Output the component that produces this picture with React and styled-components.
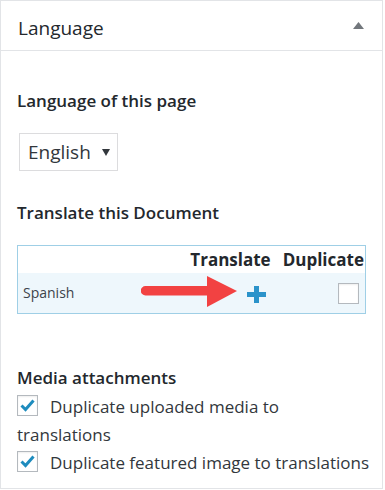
import React from "react";
import styled, { createGlobalStyle } from "styled-components";

const GlobalStyle = createGlobalStyle`
  html, body {
    margin: 0;
    padding: 0;
    background: #fff;
  }
  body {
    font-family: "Open Sans", "Noto Sans", sans-serif;
    color: #32373c;
  }
`;

const languages = [{ name: "Spanish", duplicate: false }];

const mediaOptions = [
  "Duplicate uploaded media to translations",
  "Duplicate featured image to translations"
];

const CheckIcon = () => (
  <svg width="15" height="13" viewBox="0 0 15 13">
    <path d="M1.5 6.5 L5.5 10.5 L13.5 1.5" fill="none" stroke="#1e8cbe" strokeWidth="3" />
  </svg>
);

const PlusIcon = () => (
  <svg width="19" height="17" viewBox="0 0 19 17">
    <rect x="0" y="6" width="19" height="5" fill="#2b93ca" />
    <rect x="7" y="0" width="5" height="17" fill="#2b93ca" />
  </svg>
);

const RedArrow = () => (
  <svg width="97" height="31" viewBox="0 0 97 31">
    <path d="M4.5 10 H66 V0 L96 15 L66 31 V19.5 H4.5 A4.75 4.75 0 0 1 4.5 10 Z" fill="#f24242" />
  </svg>
);

export default function App() {
  return (
    <>
      <GlobalStyle />
      <Panel>
        <Header>
          <PanelTitle>Language</PanelTitle>
          <Toggle>
            <svg width="11" height="7" viewBox="0 0 11 7">
              <path d="M5.5 0 L11 7 H0 Z" fill="#72777c" />
            </svg>
          </Toggle>
        </Header>
        <Body>
          <Label>Language of this page</Label>
          <Select>
            <span>English</span>
            <svg width="8" height="7" viewBox="0 0 8 7">
              <path d="M0 0 H8 L4 7 Z" fill="#32373c" />
            </svg>
          </Select>

          <Label top={30}>Translate this Document</Label>
          <Table>
            <thead>
              <tr>
                <Th first />
                <Th>Translate</Th>
                <Th>Duplicate</Th>
              </tr>
            </thead>
            <tbody>
              {languages.map((lang) => (
                <Row key={lang.name}>
                  <LangCell>
                    {lang.name}
                    <ArrowOverlay>
                      <RedArrow />
                    </ArrowOverlay>
                  </LangCell>
                  <ActionCell>
                    <PlusIcon />
                  </ActionCell>
                  <ActionCell>
                    <Checkbox />
                  </ActionCell>
                </Row>
              ))}
            </tbody>
          </Table>

          <Label top={52} bottom={3}>Media attachments</Label>
          {mediaOptions.map((text) => (
            <Option key={text}>
              <Checkbox checked>
                <CheckIcon />
              </Checkbox>
              {text}
            </Option>
          ))}
        </Body>
      </Panel>
    </>
  );
}

const Panel = styled.div`
  width: 383px;
  height: 489px;
  box-sizing: border-box;
  border: 1px solid #e2e4e7;
  background: #fff;
`;

const Header = styled.div`
  height: 50px;
  box-sizing: border-box;
  border-bottom: 1px solid #e2e4e7;
  padding: 4px 18px 0 17px;
  display: flex;
  align-items: center;
  justify-content: space-between;
`;

const PanelTitle = styled.h2`
  margin: 0;
  font-size: 19px;
  font-weight: 400;
  color: #23282d;
  line-height: 24px;
`;

const Toggle = styled.span`
  display: flex;
  margin-top: -4px;
`;

const Body = styled.div`
  padding: 0 8px 0 16px;
`;

const Label = styled.div`
  margin: ${(p) => p.top ?? 38}px 0 ${(p) => p.bottom ?? 20}px;
  font-size: 17px;
  font-weight: 600;
  line-height: 24px;
  color: #23282d;
`;

const Select = styled.div`
  margin-left: 2px;
  width: 99px;
  height: 38px;
  box-sizing: border-box;
  border: 1px solid #dcdcde;
  padding: 0 7px 0 8px;
  display: flex;
  align-items: center;
  justify-content: space-between;
  font-size: 19px;
  color: #32373c;
`;

const Table = styled.table`
  margin-top: 18px;
  width: 349px;
  border-collapse: collapse;
  border: 1px solid #9fcfe6;
`;

const Th = styled.th`
  width: ${(p) => (p.first ? "100%" : "auto")};
  height: 27px;
  padding: 0 1px 0 11px;
  text-align: right;
  font-size: 17px;
  font-weight: 700;
  line-height: 27px;
  color: #23282d;
  white-space: nowrap;
`;

const Row = styled.tr`
  height: 40px;
  background: #eef7fc;
`;

const LangCell = styled.td`
  position: relative;
  padding: 0 0 0 5px;
  font-size: 14px;
  color: #3c434a;
`;

const ArrowOverlay = styled.span`
  position: absolute;
  left: 123px;
  top: 3px;
  display: flex;
`;

const ActionCell = styled.td`
  padding: 0 6px 0 0;
  text-align: right;
  vertical-align: middle;

  & > * {
    vertical-align: middle;
  }
`;

const Checkbox = styled.span`
  display: inline-flex;
  align-items: center;
  justify-content: center;
  width: 21px;
  height: 21px;
  box-sizing: border-box;
  border: 1px solid #b4b9be;
  background: #fff;
  box-shadow: inset 0 1px 2px rgba(0, 0, 0, 0.07);
  vertical-align: ${(p) => (p.checked ? "1px" : "middle")};
  margin-right: ${(p) => (p.checked ? "12px" : "0")};
`;

const Option = styled.div`
  font-size: 17px;
  line-height: 28px;
  color: #32373c;
`;
